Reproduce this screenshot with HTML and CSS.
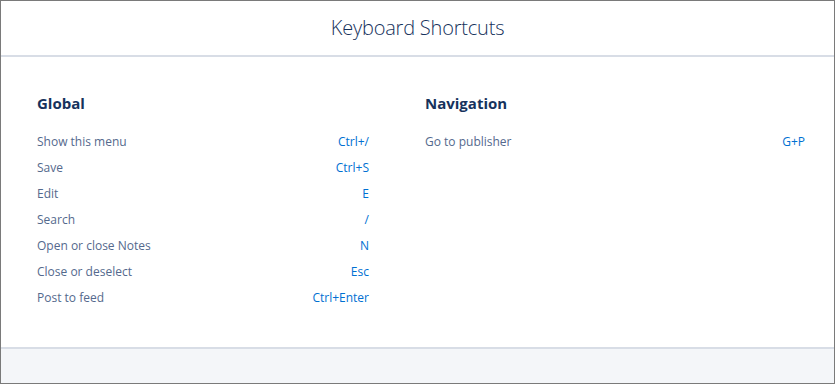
FILE: index.html
```html
<!DOCTYPE html>
<html>
<head>
<meta charset="utf-8">
<link rel="stylesheet" href="styles.css">
</head>
<body>
<div class="modal">
  <header class="modal-header">
    <h2 class="title">Keyboard Shortcuts</h2>
  </header>
  <section class="modal-body">
    <div class="col col-left">
      <h3 class="col-title">Global</h3>
      <ul class="list">
        <li class="row"><span class="label">Show this menu</span><span class="key">Ctrl+/</span></li>
        <li class="row"><span class="label">Save</span><span class="key">Ctrl+S</span></li>
        <li class="row"><span class="label">Edit</span><span class="key">E</span></li>
        <li class="row"><span class="label">Search</span><span class="key">/</span></li>
        <li class="row"><span class="label">Open or close Notes</span><span class="key">N</span></li>
        <li class="row"><span class="label">Close or deselect</span><span class="key">Esc</span></li>
        <li class="row"><span class="label">Post to feed</span><span class="key">Ctrl+Enter</span></li>
      </ul>
    </div>
    <div class="col col-right">
      <h3 class="col-title">Navigation</h3>
      <ul class="list">
        <li class="row"><span class="label">Go to publisher</span><span class="key">G+P</span></li>
      </ul>
    </div>
  </section>
  <footer class="modal-footer"></footer>
</div>
</body>
</html>
```
FILE: styles.css
```css
* { box-sizing: border-box; }
html, body { margin: 0; padding: 0; }
body {
  width: 835px;
  height: 384px;
  font-family: "Open Sans", "Liberation Sans", sans-serif;
  background: #fff;
}
.modal {
  width: 835px;
  height: 384px;
  border: 1px solid #7a7a7a;
  display: flex;
  flex-direction: column;
  background: #fff;
}
.modal-header {
  height: 56px;
  border-bottom: 2px solid #d8dde6;
  display: flex;
  align-items: center;
  justify-content: center;
}
.title {
  margin: 0;
  font-size: 20px;
  font-weight: 300;
  color: #16325c;
  letter-spacing: -0.2px;
  padding-bottom: 2px;
}
.modal-body {
  flex: 1;
  display: grid;
  grid-template-columns: 332px 380px;
  column-gap: 56px;
  padding: 36px 0 0 36px;
}
.col-title {
  margin: 0 0 20px;
  font-size: 15px;
  font-weight: 700;
  color: #16325c;
  line-height: 20px;
}
.list {
  list-style: none;
  margin: 0;
  padding: 0;
}
.row {
  display: flex;
  justify-content: space-between;
  height: 26px;
  line-height: 18px;
  font-size: 12px;
}
.label { color: #54698d; }
.key { color: #0070d2; }
.modal-footer {
  height: 36px;
  background: #f4f6f9;
  border-top: 2px solid #d8dde6;
}
```
